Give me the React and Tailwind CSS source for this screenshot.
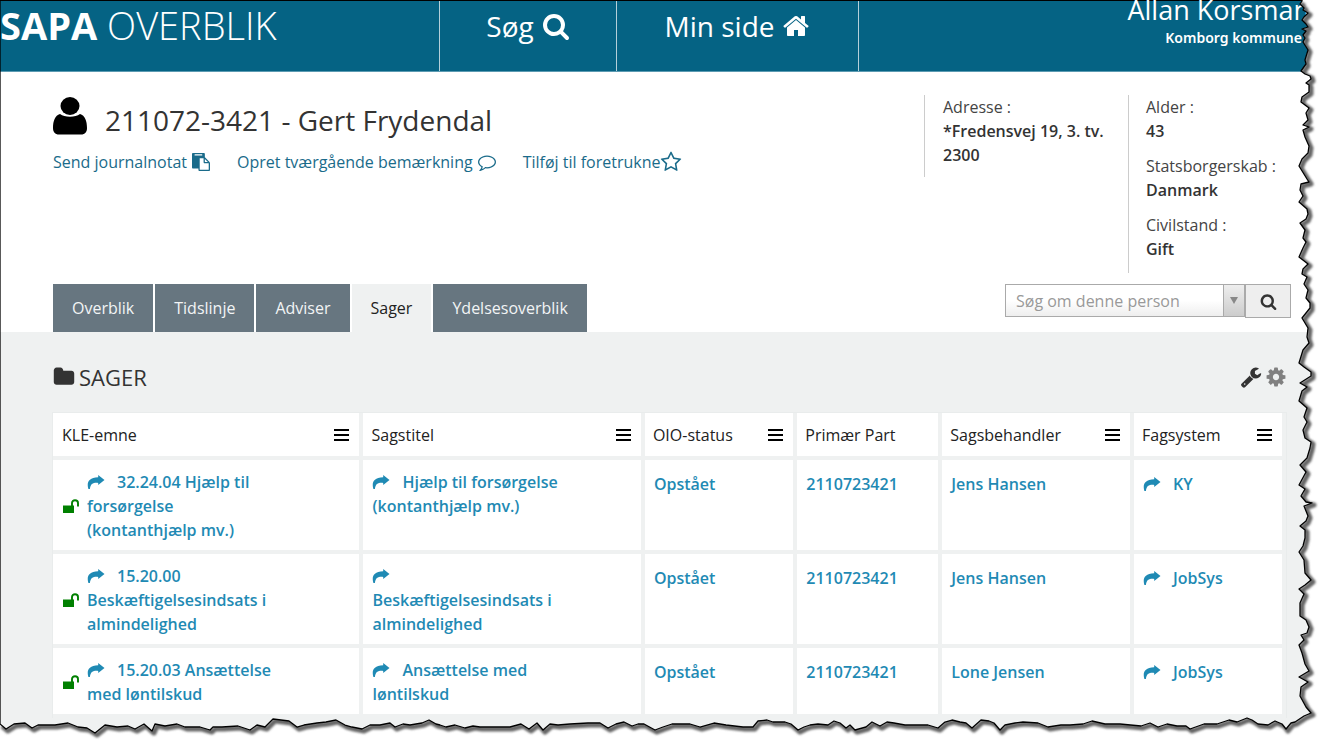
import React from "react";

const ICONS = {
  search:
    "M1216 832q0-185-131.5-316.5t-316.5-131.5-316.5 131.5-131.5 316.5 131.5 316.5 316.5 131.5 316.5-131.5 131.5-316.5zm512 832q0 52-38 90t-90 38q-54 0-90-38l-343-342q-179 124-399 124-143 0-273.5-55.5t-225-150-150-225-55.5-273.5 55.5-273.5 150-225 225-150 273.5-55.5 273.5 55.5 225 150 150 225 55.5 273.5q0 220-124 399l343 343q37 37 37 90z",
  home: "M1472 992v480q0 26-19 45t-45 19h-384v-384h-256v384h-384q-26 0-45-19t-19-45v-480q0-1 .5-3t.5-3l575-474 575 474q1 2 1 6zm223-69l-62 74q-8 9-21 11h-3q-13 0-21-7l-692-577-692 577q-12 8-24 7-13-2-21-11l-62-74q-8-10-7-23.5t11-21.5l719-599q32-26 76-26t76 26l244 204v-195q0-14 9-23t23-9h192q14 0 23 9t9 23v408l219 182q10 8 11 21.5t-7 23.5z",
  comment:
    "M896 384q-204 0-381.5 69.5t-282 187.5-104.5 255q0 112 71.5 213.5t201.5 175.5l87 50-27 96q-24 91-70 172 152-63 275-171l43-38 57 6q69 8 130 8 204 0 381.5-69.5t282-187.5 104.5-255-104.5-255-282-187.5-381.5-69.5zm896 512q0 174-120 321.5t-326 233-450 85.5q-70 0-145-8-198 175-460 242-49 14-114 22h-5q-15 0-27-10.5t-16-27.5v-1q-3-4-.5-12t2-10 4.5-9.5l6-9 7-8.5 8-9q7-8 31-34.5t34.5-38 31-39.5 32.5-51 27-59 26-76q-157-89-247.5-220t-90.5-281q0-174 120-321.5t326-233 450-85.5 450 85.5 326 233 120 321.5z",
  star: "M1201 1004l306-297-422-62-189-382-189 382-422 62 306 297-73 421 378-199 377 199zm527-357q0 22-26 48l-363 354 86 500q1 7 1 20 0 50-41 50-19 0-40-12l-449-236-449 236q-22 12-40 12-21 0-31.5-14.5t-10.5-35.5q0-6 2-20l86-500-364-354q-25-27-25-48 0-37 56-46l502-73 225-455q19-41 49-41t49 41l225 455 502 73q56 9 56 46z",
  folder:
    "M1728 608v704q0 92-66 158t-158 66h-1216q-92 0-158-66t-66-158v-960q0-92 66-158t158-66h320q92 0 158 66t66 158v32h672q92 0 158 66t66 158z",
  cog: "M1152 896q0-106-75-181t-181-75-181 75-75 181 75 181 181 75 181-75 75-181zm512-109v222q0 12-8 23t-20 13l-185 28q-19 54-39 91 35 50 107 138 10 12 10 25t-9 23q-27 37-99 108t-94 71q-12 0-26-9l-138-108q-44 23-91 38-16 136-29 186-7 28-36 28h-222q-14 0-24.5-8.5t-11.5-21.5l-28-184q-49-16-90-37l-141 107q-10 9-25 9-14 0-25-11-126-114-165-168-7-10-7-23 0-12 8-23 15-21 51-66.5t54-70.5q-27-50-41-99l-183-27q-13-2-21-12.5t-8-23.5v-222q0-12 8-23t19-13l186-28q14-46 39-92-40-57-107-138-10-12-10-24 0-10 9-23 26-36 98.5-107.5t94.5-71.5q13 0 26 10l138 107q44-23 91-38 16-136 29-186 7-28 36-28h222q14 0 24.5 8.5t11.5 21.5l28 184q49 16 90 37l142-107q9-9 24-9 13 0 25 10 129 119 165 170 7 8 7 22 0 12-8 23-15 21-51 66.5t-54 70.5q26 50 41 98l183 28q13 2 21 12.5t8 23.5z",
  wrench:
    "M448 1472q0-26-19-45t-45-19-45 19-19 45 19 45 45 19 45-19 19-45zm644-420l-682 682q-37 37-90 37-52 0-91-37l-106-108q-38-36-38-90 0-53 38-91l681-681q39 98 114.5 173.5t173.5 114.5zm634-435q0 39-23 106-47 134-164.5 217.5t-258.5 83.5q-185 0-316.5-131.5t-131.5-316.5 131.5-316.5 316.5-131.5q58 0 121.5 16.5t107.5 46.5q16 11 16 28t-16 28l-293 169v224l193 107q5-3 79-48.5t135.5-81 70.5-35.5q15 0 23.5 10t8.5 25z",
  paste:
    "M768 1664h896v-640h-416q-40 0-68-28t-28-68v-416h-384v1152zm256-1440v-64q0-13-9.5-22.5t-22.5-9.5h-704q-13 0-22.5 9.5t-9.5 22.5v64q0 13 9.5 22.5t22.5 9.5h704q13 0 22.5-9.5t9.5-22.5zm256 672h299l-299-299v299zm512 128v672q0 40-28 68t-68 28h-960q-40 0-68-28t-28-68v-160h-544q-40 0-68-28t-28-68v-1344q0-40 28-68t68-28h1088q40 0 68 28t28 68v328q21 13 36 28l408 408q28 28 48 76t20 88z",
};

function Icon({ name, className }) {
  return (
    <svg viewBox="0 0 1792 1792" fill="currentColor" aria-hidden="true" className={className}>
      <path d={ICONS[name]} />
    </svg>
  );
}

function UserIcon() {
  return (
    <svg viewBox="0 0 34 38" fill="#000" aria-hidden="true" className="h-[38px] w-[34px]">
      <ellipse cx="17" cy="9" rx="9.5" ry="9" />
      <path d="M7 17C2 18.500 0 24 0 31c0 4 2 6.500 6 6.500h22c4 0 6-2.500 6-6.500 0-7-2-12.500-7-14-2.500 1.800-5.800 2.800-10 2.800s-7.500-1-10-2.800z" />
    </svg>
  );
}

function Forward() {
  return (
    <svg viewBox="0 0 17 14" fill="currentColor" aria-hidden="true" className="mr-3 inline-block h-[14px] w-[18px] align-[-1px]">
      <path d="M10.700 0 17 5 10.700 10V7.900C6 7.500 3 8.500 2.400 14H.9C-.9 8 .5 2.600 10.700 2.200z" />
    </svg>
  );
}

function Unlock() {
  return (
    <svg viewBox="0 0 17 15" fill="none" role="img" aria-label="Åben" className="h-[15px] w-[17px] shrink-0 text-[#008000]">
      <path d="M1 6.500h11v7.500H1z" fill="currentColor" />
      <path d="M10 7V4a3 2.800 0 0 1 6 0V7.500" stroke="currentColor" strokeWidth="1.900" />
    </svg>
  );
}

function MenuButton({ label }) {
  return (
    <button type="button" aria-label={"Menu for " + label} className="flex h-4 w-[15px] flex-col justify-center gap-[3px]">
      <span className="h-[2px] w-full bg-black" />
      <span className="h-[2px] w-full bg-black" />
      <span className="h-[2px] w-full bg-black" />
    </button>
  );
}

const COLUMNS = [
  { label: "KLE-emne", menu: true, width: "w-[25.100%]" },
  { label: "Sagstitel", menu: true, width: "w-[22.900%]" },
  { label: "OIO-status", menu: true, width: "w-[12.400%]" },
  { label: "Primær Part", menu: false, width: "w-[11.800%]" },
  { label: "Sagsbehandler", menu: true, width: "w-[15.600%]" },
  { label: "Fagsystem", menu: true, width: "w-[12.200%]" },
];

const ROWS = [
  {
    kle: "32.24.04 Hjælp til forsørgelse (kontanthjælp mv.)",
    title: "Hjælp til forsørgelse (kontanthjælp mv.)",
    handler: "Jens Hansen",
    system: "KY",
  },
  {
    kle: "15.20.00 Beskæftigelsesindsats i almindelighed",
    title: "Beskæftigelsesindsats i almindelighed",
    handler: "Jens Hansen",
    system: "JobSys",
  },
  {
    kle: "15.20.03 Ansættelse med løntilskud",
    title: "Ansættelse med løntilskud",
    handler: "Lone Jensen",
    system: "JobSys",
  },
];

const TABS = ["Overblik", "Tidslinje", "Adviser", "Sager", "Ydelsesoverblik"];

function Fact({ label, children }) {
  return (
    <div>
      <dt className="text-[#444]">{label}</dt>
      <dd className="font-semibold text-[#333]">{children}</dd>
    </div>
  );
}

const RIGHT_EDGE =
  "1302,1 1300,4 1304,8 1303,10 1308,13 1304,17 1302,20 1306,24 1308,27 1302,29 1306,31 1303,35 1305,38 1303,42 1308,50 1305,60 1306,64 1301,71 1305,74 1310,76 1311,79 1306,83 1309,85 1309,92 1302,97 1301,102 1305,105 1309,108 1306,113 1308,120 1303,125 1309,127 1303,130 1305,137 1309,146 1308,153 1302,159 1299,166 1307,179 1309,182 1301,184 1300,190 1303,196 1299,202 1307,209 1308,214 1306,219 1300,223 1305,230 1303,238 1306,242 1303,248 1299,257 1308,264 1303,269 1302,274 1307,277 1304,284 1308,290 1306,298 1310,303 1310,308 1302,318 1308,328 1307,337 1309,343 1303,350 1299,363 1304,367 1311,372 1311,376 1300,383 1307,387 1302,391 1299,401 1307,408 1304,417 1307,422 1303,430 1305,438 1311,442 1310,448 1307,458 1300,465 1306,472 1299,485 1305,489 1301,496 1306,502 1312,503 1304,506 1308,516 1306,521 1300,526 1305,530 1305,538 1303,546 1299,552 1304,560 1305,573 1311,580 1305,585 1299,589 1304,594 1300,603 1300,616 1306,620 1309,627 1307,633 1301,635 1304,640 1299,645 1302,653 1305,664 1309,671 1299,677 1308,682 1301,687 1300,696 1306,707 1311,713";
const BOTTOM_EDGE =
  "1304,716 1295,722 1291,723 1286,729 1282,724 1275,721 1268,725 1258,724 1252,720 1247,718 1237,722 1229,720 1217,724 1204,724 1190,729 1186,726 1177,726 1167,724 1158,727 1150,723 1141,726 1120,724 1105,724 1092,721 1083,724 1070,725 1061,725 1048,727 1038,723 1023,722 1015,723 1005,725 1000,730 994,723 989,721 981,720 972,728 966,723 960,722 952,720 945,722 938,728 928,725 918,725 905,725 894,723 887,722 880,726 872,722 866,727 855,730 850,725 846,728 840,723 834,721 828,725 818,724 810,725 804,727 798,730 791,724 785,722 773,722 767,720 758,721 753,727 743,727 726,725 714,723 700,727 690,724 680,724 672,724 663,727 655,730 644,724 638,724 632,726 624,722 616,724 608,728 600,723 588,723 570,724 558,725 550,724 543,730 537,723 529,729 521,724 510,727 495,727 480,727 473,726 465,728 455,725 446,727 440,725 436,724 429,720 422,723 410,725 403,724 395,727 390,723 380,725 370,725 362,729 352,727 345,725 336,720 326,722 317,723 304,725 297,727 289,721 273,719 265,727 257,725 250,730 238,726 222,727 213,727 210,730 200,727 185,727 177,724 165,726 155,724 152,731 144,724 135,729 128,726 117,727 105,725 95,733 87,728 78,727 68,723 55,725 38,725 32,728 25,723 14,724 6,729 0,724";
const EDGE = RIGHT_EDGE + " " + BOTTOM_EDGE;
const OUTSIDE = "1302,0 1325,0 1325,745 0,745 0,724 " + EDGE.split(" ").reverse().join(" ");

function TornEdge() {
  return (
    <svg viewBox="0 0 1325 745" preserveAspectRatio="none" aria-hidden="true" className="pointer-events-none absolute inset-0 h-full w-full">
      <defs>
        <filter id="edge-shadow" x="-5%" y="-5%" width="110%" height="110%">
          <feGaussianBlur stdDeviation="1" />
        </filter>
        <clipPath id="outside">
          <polygon points={OUTSIDE} />
        </clipPath>
      </defs>
      <polygon points={OUTSIDE} fill="#fff" />
      <g clipPath="url(#outside)">
        <polyline points={EDGE} transform="translate(2 2)" fill="none" stroke="#666" strokeWidth="5" strokeLinejoin="round" filter="url(#edge-shadow)" />
      </g>
      <polyline points={"1302,0 " + EDGE + " 0,0"} fill="none" stroke="#000" strokeWidth="1.300" strokeLinejoin="round" />
    </svg>
  );
}

export default function App() {
  return (
    <div className="relative min-h-screen overflow-hidden bg-[#eff1f1] font-['Open_Sans',sans-serif] text-base text-[#333]">
      <header className="flex h-[72px] border-t border-b border-t-black border-b-[#5c9bb2] bg-[#056384] text-white">
        <div className="w-[439px] shrink-0 pt-1 text-[38px] leading-10">
          <span className="font-bold">SAPA</span> <span className="font-light">OVERBLIK</span>
        </div>
        <nav className="flex shrink-0 text-[28px] leading-9">
          <a href="#soeg" className="flex w-[177px] justify-center gap-2 border-l border-[#b4d0da] pt-[7px]">
            Søg
            <Icon name="search" className="mt-1 size-7" />
          </a>
          <a href="#min-side" className="flex w-[243px] justify-center gap-2 border-x border-[#b4d0da] pt-[7px]">
            Min side
            <Icon name="home" className="mt-1 size-7" />
          </a>
        </nav>
        <div className="ml-auto text-right whitespace-nowrap">
          <div className="-mt-[9px] pr-[15px] text-[27px] leading-9">Allan Korsman</div>
          <div className="pr-[23px] font-['Noto_Sans',sans-serif] text-sm leading-5 font-semibold">Komborg kommune</div>
        </div>
      </header>

      <section className="flex h-[212px] bg-white pt-[23px]">
        <div className="pl-[53px]">
          <h1 className="flex items-start gap-[18px] pt-[2px] text-[28px] leading-10">
            <UserIcon />
            <span className="pt-[3px]">211072-3421 - Gert Frydendal</span>
          </h1>
          <div className="mt-[10px] flex gap-[27px] text-base leading-6 text-[#1a6b8a]">
            <a href="#journalnotat" className="flex items-center gap-[5px]">
              Send journalnotat <Icon name="paste" className="size-[18px]" />
            </a>
            <a href="#bemaerkning" className="flex items-center gap-[5px]">
              Opret tværgående bemærkning <Icon name="comment" className="size-[18px]" />
            </a>
            <a href="#foretrukne" className="flex items-center">
              Tilføj til foretrukne <Icon name="star" className="size-[22px]" />
            </a>
          </div>
        </div>
        <dl className="ml-auto h-[82px] w-[204px] border-l border-[#ccc] pl-[18px] leading-6">
          <Fact label="Adresse :">
            *Fredensvej 19, 3. tv.
            <br />
            2300
          </Fact>
        </dl>
        <dl className="flex h-[178px] w-[197px] flex-col gap-[11px] border-l border-[#ccc] pl-[17px] leading-6">
          <Fact label="Alder :">43</Fact>
          <Fact label="Statsborgerskab :">Danmark</Fact>
          <Fact label="Civilstand :">Gift</Fact>
        </dl>
      </section>

      <div className="flex h-12 justify-between bg-white pr-[34px] pl-[53px]">
        <div role="tablist" className="flex gap-[2px]">
          {TABS.map((tab) => (
            <button
              key={tab}
              type="button"
              role="tab"
              aria-selected={tab === "Sager"}
              className={
                tab === "Sager"
                  ? "bg-[#eff1f1] px-[19px] text-[#222]"
                  : "bg-[#677680] px-[19px] text-[#f2f4f5]"
              }
            >
              {tab}
            </button>
          ))}
        </div>
        <form className="flex h-[34px] w-[286px]">
          <input
            type="text"
            aria-label="Søg om denne person"
            placeholder="Søg om denne person"
            className="h-[33px] min-w-0 flex-1 border border-[#aaa] bg-linear-to-b from-white from-50% to-[#eee] pl-[10px] placeholder:text-[#999]"
          />
          <button type="button" aria-label="Vis valg" className="flex h-[33px] w-[21px] items-center justify-center border-y border-r border-[#aaa] bg-linear-to-b from-[#eee] to-[#ccc]">
            <svg viewBox="0 0 8 7" className="h-[7px] w-2" fill="#888" aria-hidden="true">
              <path d="M0 0h8L4 7z" />
            </svg>
          </button>
          <button type="submit" aria-label="Søg" className="flex w-[46px] items-center justify-center border border-[#aaa] bg-[#eee] text-[#333]">
            <Icon name="search" className="size-[17px]" />
          </button>
        </form>
      </div>

      <main className="pr-[38px] pl-[52px]">
        <div className="flex h-20 items-center justify-between pt-[10px] pl-px">
          <h2 className="flex items-center gap-1 text-[22px] leading-8">
            <Icon name="folder" className="size-[22px]" />
            SAGER
          </h2>
          <div className="flex gap-[3px]">
            <button type="button" aria-label="Værktøj">
              <Icon name="wrench" className="size-[22px] text-[#333]" />
            </button>
            <button type="button" aria-label="Indstillinger">
              <Icon name="cog" className="size-[22px] text-[#808080]" />
            </button>
          </div>
        </div>
        <div className="border-x border-t border-[#e9ecec] pr-1">
          <table className="w-full table-fixed border-collapse">
            <thead>
              <tr className="h-[45px]">
                {COLUMNS.map((c) => (
                  <th key={c.label} className={"border-r-4 border-b-4 border-[#eff1f1] bg-white pr-[10px] pl-2 text-left font-normal text-[#222] first:pl-[9px] last:border-r-0 " + c.width}>
                    <div className="flex items-center justify-between leading-[22px]">
                      {c.label}
                      {c.menu && <MenuButton label={c.label} />}
                    </div>
                  </th>
                ))}
              </tr>
            </thead>
            <tbody className="font-semibold text-[#1f8ab4]">
              {ROWS.map((r) => (
                <tr key={r.kle} className="align-top [&>td]:border-r-4 [&>td]:border-b-4 [&>td]:border-[#eff1f1] [&>td]:bg-white [&>td]:px-[9px] [&>td:last-child]:border-r-0">
                  <td className="pt-[10px] pb-2">
                    <div className="flex items-center gap-2 leading-6">
                      <Unlock />
                      <a href="#sag" className="max-w-[192px]">
                        <Forward />
                        {r.kle}
                      </a>
                    </div>
                  </td>
                  <td className="pt-[10px] pb-2">
                    <a href="#sag" className="block max-w-[192px] leading-6">
                      <Forward />
                      {r.title}
                    </a>
                  </td>
                  <td className="pt-3 leading-6">
                    <a href="#status">Opstået</a>
                  </td>
                  <td className="pt-3 leading-6">
                    <a href="#part">2110723421</a>
                  </td>
                  <td className="pt-3 leading-6">
                    <a href="#sagsbehandler">{r.handler}</a>
                  </td>
                  <td className="pt-3 leading-6">
                    <a href="#fagsystem">
                      <Forward />
                      {r.system}
                    </a>
                  </td>
                </tr>
              ))}
            </tbody>
          </table>
        </div>
      </main>
      <TornEdge />
    </div>
  );
}
